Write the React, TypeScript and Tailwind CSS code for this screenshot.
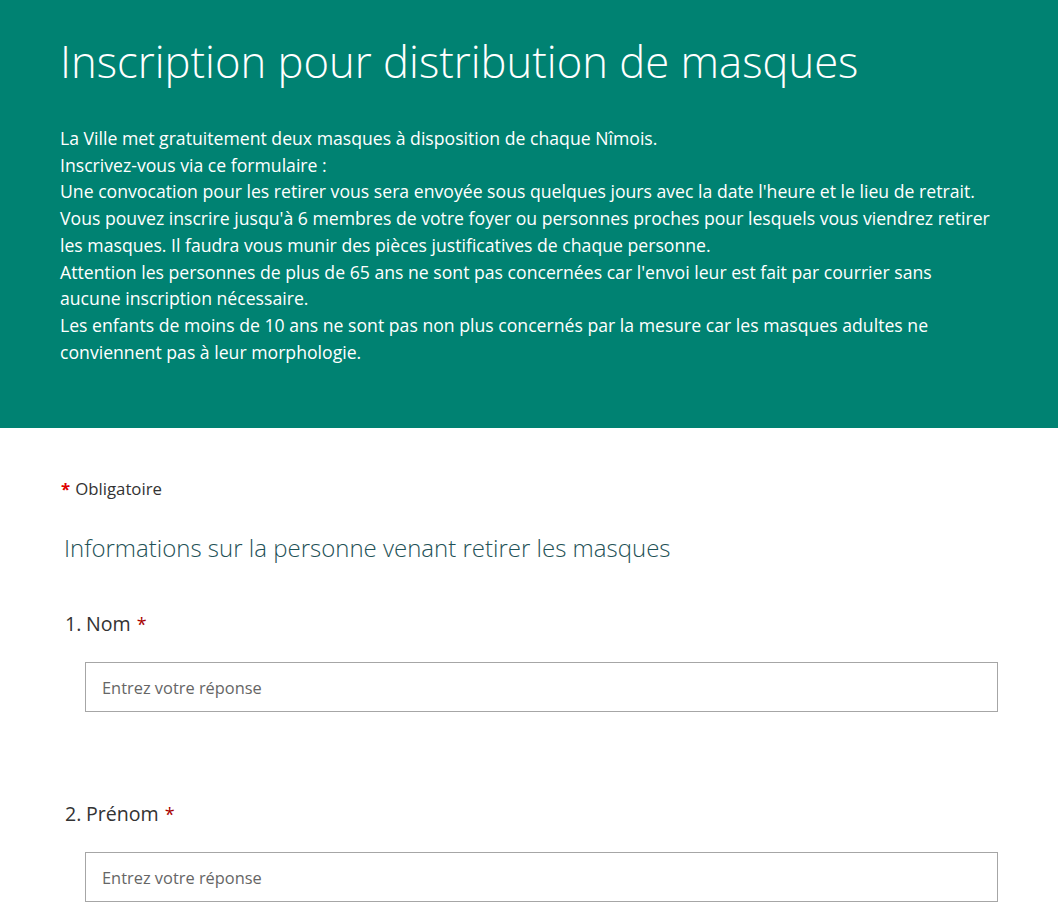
export default function App() {
  const lines = [
    "La Ville met gratuitement deux masques à disposition de chaque Nîmois.",
    "Inscrivez-vous via ce formulaire :",
    "Une convocation pour les retirer vous sera envoyée sous quelques jours avec la date l'heure et le lieu de retrait.",
    "Vous pouvez inscrire jusqu'à 6 membres de votre foyer ou personnes proches pour lesquels vous viendrez retirer les masques. Il faudra vous munir des pièces justificatives de chaque personne.",
    "Attention les personnes de plus de 65 ans ne sont pas concernées car l'envoi leur est fait par courrier sans aucune inscription nécessaire.",
    "Les enfants de moins de 10 ans ne sont pas non plus concernés par la mesure car les masques adultes ne conviennent pas à leur morphologie.",
  ];
  const questions = ["Nom", "Prénom"];

  return (
    <div className="h-[921px] overflow-hidden bg-white font-['Open_Sans','Noto_Sans',sans-serif]">
      <header className="h-[428px] bg-[#008272] pl-[60px] pr-[66px] pt-[31px] text-white">
        <h1 className="text-[43.6px] font-light leading-[60px]">Inscription pour distribution de masques</h1>
        <div className="mt-[34px] text-[17.65px] leading-[26.7px]">
          {lines.map((line) => (
            <p key={line}>{line}</p>
          ))}
        </div>
      </header>
      <main className="pl-[61px] pr-[60px] pt-[49px]">
        <p className="text-[16.8px] leading-6 text-[#333]">
          <span className="mr-[5px] font-bold text-[#e00000]">*</span>Obligatoire
        </p>
        <h2 className="ml-[3px] mt-[31px] text-[24px] font-light leading-8 text-[#1f5257]">
          Informations sur la personne venant retirer les masques
        </h2>
        <div className="mt-[46px] flex flex-col gap-[88px]">
          {questions.map((q, i) => (
            <div key={q}>
              <div className="ml-[4px] flex text-[19.6px] leading-7 text-[#333]">
                <span className="w-[21px]">{i + 1}.</span>
                <span>{q}</span>
                <span className="ml-[6px] text-[18px] text-[#a80000]">*</span>
              </div>
              <div className="ml-[24px] mt-[24px] flex h-[50px] items-center border border-[#a6a6a6] pl-4 pr-4 pt-[3px] text-[16.4px] text-[#666]">
                Entrez votre réponse
              </div>
            </div>
          ))}
        </div>
      </main>
    </div>
  );
}
